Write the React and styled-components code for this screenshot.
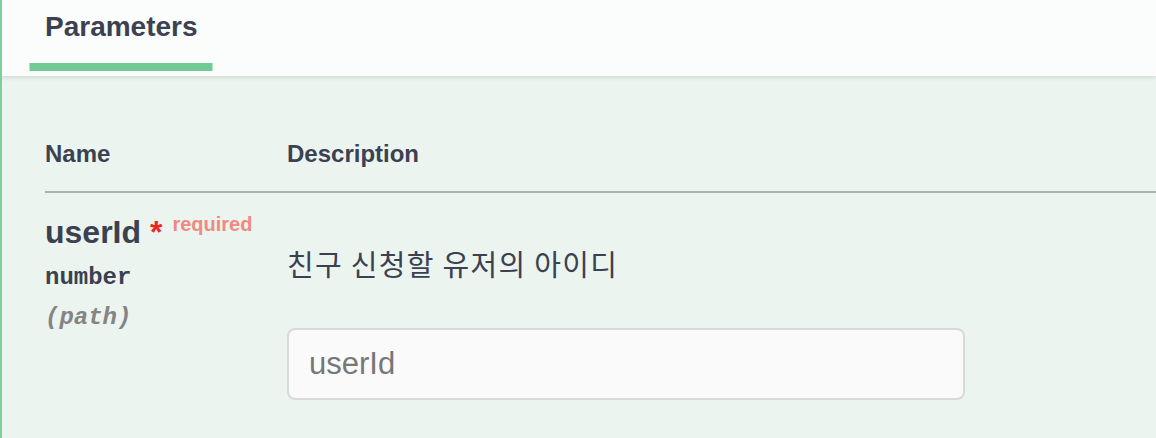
import React from "react";
import styled, { createGlobalStyle } from "styled-components";

const GlobalStyle = createGlobalStyle`
  html, body { margin: 0; padding: 0; background: #ebf4ef; }
  body { font-family: "Liberation Sans", Arial, sans-serif; color: #3b4151; }
`;

const Panel = styled.div`
  width: 1156px;
  height: 438px;
  box-sizing: border-box;
  border-left: 2px solid #7ccf9f;
  background: #ebf4ef;
  overflow: hidden;
`;

const SectionHeader = styled.div`
  position: relative;
  z-index: 1;
  height: 76px;
  box-sizing: border-box;
  padding: 11px 0 0 43px;
  background: #fbfdfc;
  box-shadow: 0 2px 4px rgba(0, 0, 0, 0.1);
`;

const TabTitle = styled.h4`
  margin: 0;
  display: inline-block;
  position: relative;
  font-size: 28px;
  line-height: 32px;
  font-weight: 700;
  color: #3b4151;

  &::after {
    content: "";
    position: absolute;
    top: 52px;
    left: 50%;
    transform: translateX(-50%);
    width: 120%;
    height: 8px;
    background: #70ca96;
  }
`;

const Params = styled.div`
  padding-left: 43px;
`;

const Row = styled.div`
  display: grid;
  grid-template-columns: 242px 1fr;
  align-items: start;
`;

const HeadRow = styled(Row)`
  padding: 64px 0 23px;
  border-bottom: 2px solid #abb3b2;
`;

const HeadCell = styled.div`
  font-size: 24px;
  line-height: 28px;
  font-weight: 700;
  color: #3b4151;
`;

const ParamRow = styled(Row)`
  padding-top: 21px;
`;

const NameCell = styled.div`
  display: flex;
  flex-direction: column;
`;

const ParamName = styled.div`
  font-size: 32px;
  line-height: 36px;
  font-weight: 700;
  color: #3b4151;
  white-space: nowrap;
`;

const Asterisk = styled.span`
  color: #f0261e;
`;

const Required = styled.span`
  position: relative;
  top: -12px;
  padding: 0 10px;
  font-size: 20px;
  font-weight: 700;
  color: #f08a80;
`;

const Mono = styled.div`
  font-family: "Liberation Mono", "Courier New", monospace;
  font-size: 24px;
  line-height: 28px;
  font-weight: 700;
  margin-top: ${(p) => (p.$muted ? "12px" : "10px")};
  color: ${(p) => (p.$muted ? "#848484" : "#3b4151")};
  font-style: ${(p) => (p.$muted ? "italic" : "normal")};
`;

const DescCell = styled.div`
  display: flex;
  flex-direction: column;
  align-items: flex-start;
`;

const Description = styled.p`
  margin: 29px 0 0;
  font-family: "Noto Sans CJK KR", "Liberation Sans", sans-serif;
  font-size: 29px;
  letter-spacing: 1.3px;
  line-height: 40px;
  color: #3b4151;
`;

const TextInput = styled.input`
  margin-top: 45px;
  width: 678px;
  height: 72px;
  box-sizing: border-box;
  padding: 0 20px;
  border: 2px solid #d9d9d9;
  border-radius: 8px;
  background: #fafafa;
  font-family: "Liberation Sans", Arial, sans-serif;
  font-size: 31px;
  color: #3b4151;
  outline: none;

  &::placeholder {
    color: #777777;
  }
`;

export default function App() {
  return (
    <>
      <GlobalStyle />
      <Panel>
        <SectionHeader>
          <TabTitle>Parameters</TabTitle>
        </SectionHeader>
        <Params>
          <HeadRow>
            <HeadCell>Name</HeadCell>
            <HeadCell>Description</HeadCell>
          </HeadRow>
          <ParamRow>
            <NameCell>
              <ParamName>
                userId<Asterisk>{"\u00a0*"}</Asterisk>
                <Required>required</Required>
              </ParamName>
              <Mono>number</Mono>
              <Mono $muted>(path)</Mono>
            </NameCell>
            <DescCell>
              <Description>친구 신청할 유저의 아이디</Description>
              <TextInput type="text" placeholder="userId" />
            </DescCell>
          </ParamRow>
        </Params>
      </Panel>
    </>
  );
}
